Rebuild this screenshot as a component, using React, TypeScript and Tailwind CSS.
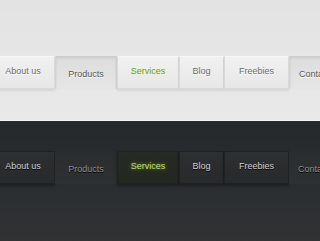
import React from 'react';

type Tab = { label: string; width: string; state?: 'pressed' | 'active' };

const TABS: Tab[] = [
  { label: 'About us', width: 'w-[64px]' },
  { label: 'Products', width: 'w-[62px]', state: 'pressed' },
  { label: 'Services', width: 'w-[62px]', state: 'active' },
  { label: 'Blog', width: 'w-[45px]' },
  { label: 'Freebies', width: 'w-[65px]' },
  { label: 'Contact', width: 'w-[64px]', state: 'pressed' },
];

// last tab runs off the right edge, so its label sits left instead of centred
const align = (label: string) => (label === 'Contact' ? 'justify-start pl-[9px]' : 'justify-center');

const LightNav: React.FC = () => (
  <div className="flex -ml-[9px] h-[33px]">
    {TABS.map((tab) => {
      if (tab.state === 'pressed') {
        return (
          <div
            key={tab.label}
            className={`${tab.width} ${align(tab.label)} shrink-0 flex items-center pt-[5px] bg-gradient-to-b from-[#dcdcdc] to-[#e6e6e6] border-x border-[#d3d3d3] shadow-[inset_0_2px_3px_rgba(0,0,0,0.08)] text-[9px] text-[#555] [text-shadow:0_1px_0_#fff]`}
          >
            {tab.label}
          </div>
        );
      }
      const active = tab.state === 'active';
      return (
        <div
          key={tab.label}
          className={`${tab.width} ${align(tab.label)} shrink-0 flex items-center pb-[2px] bg-gradient-to-b from-[#f1f1f1] to-[#e7e7e7] border border-[#d9d9d9] border-t-[#f6f6f6] shadow-[0_2px_2px_rgba(0,0,0,0.08)] text-[9px] ${
            active
              ? 'text-[#6b9b1c] [text-shadow:0_0_4px_#f4ffb0]'
              : 'text-[#6a6a6a] [text-shadow:0_1px_0_#fff]'
          }`}
        >
          {tab.label}
        </div>
      );
    })}
  </div>
);

const DarkNav: React.FC = () => (
  <div className="flex -ml-[9px] h-[33px]">
    {TABS.map((tab) => {
      if (tab.state === 'pressed') {
        return (
          <div
            key={tab.label}
            className={`${tab.width} ${align(tab.label)} shrink-0 flex items-center pt-[5px] bg-gradient-to-b from-[#2a2c2e] to-[#2e3032] text-[9px] text-[#8e9092] [text-shadow:0_1px_0_#000]`}
          >
            {tab.label}
          </div>
        );
      }
      const active = tab.state === 'active';
      return (
        <div
          key={tab.label}
          className={`${tab.width} ${align(tab.label)} shrink-0 flex items-center pb-[2px] border border-[#1f2123] shadow-[0_2px_3px_rgba(0,0,0,0.35)] text-[9px] ${
            active
              ? 'bg-gradient-to-b from-[#262a26] to-[#23271f] text-[#c2e07a] [text-shadow:0_0_4px_#7a9a30]'
              : 'bg-gradient-to-b from-[#2d2f31] to-[#27292b] text-[#d4d4d4] [text-shadow:0_1px_0_#000]'
          }`}
        >
          {tab.label}
        </div>
      );
    })}
  </div>
);

export default function App() {
  return (
    <div className="w-[320px] h-[241px] overflow-hidden font-['Liberation_Sans',Arial,sans-serif]">
      <section className="h-[120px] bg-gradient-to-b from-[#e3e3e3] to-[#e9e9e9] pt-[56px]">
        <LightNav />
      </section>
      <div className="h-px bg-[#f4f4f4]" />
      <section className="h-[120px] bg-gradient-to-b from-[#25292c] to-[#303234] pt-[30px]">
        <DarkNav />
      </section>
    </div>
  );
}
